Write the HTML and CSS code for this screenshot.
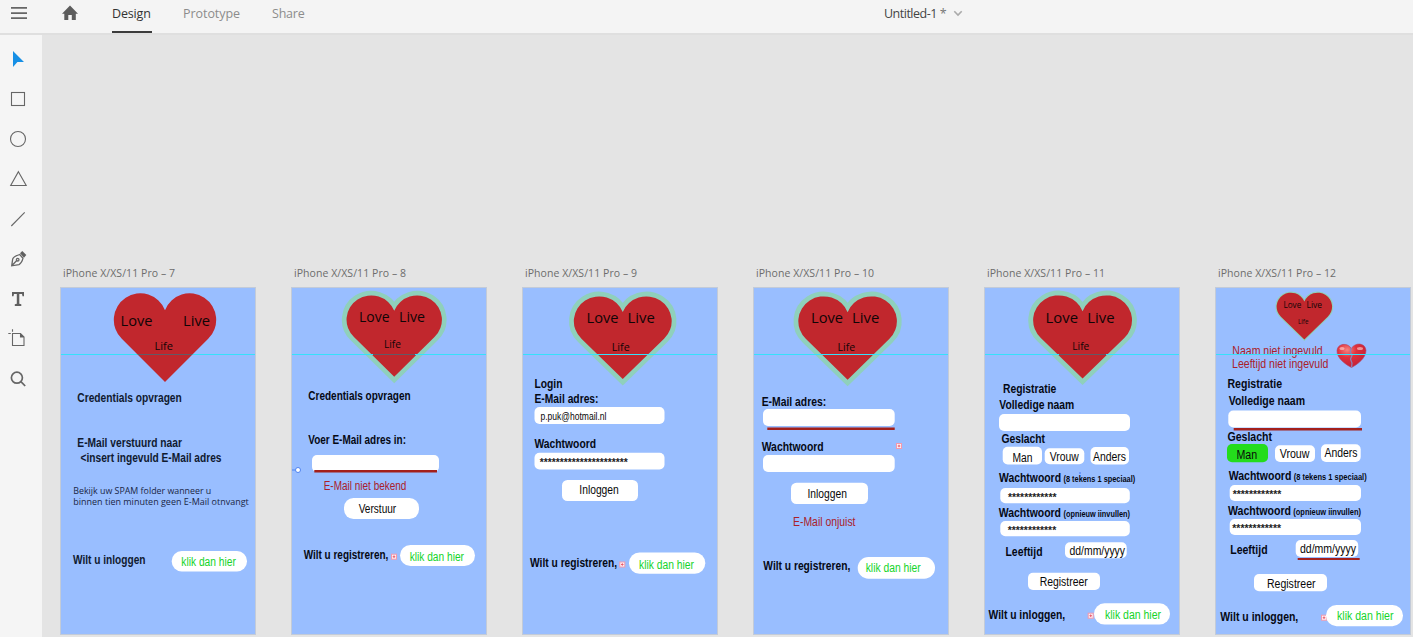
FILE: index.html
```html
<!DOCTYPE html>
<html lang="nl">
<head>
<meta charset="utf-8">
<title>Untitled-1</title>
<link rel="stylesheet" href="styles.css">
</head>
<body>
<header class="topbar">
  <svg class="menu" width="18" height="18" viewBox="0 0 18 18"><path d="M1 2.900h16M1 8.100h16M1 13.200h16"/></svg>
  <svg class="home" width="18" height="18" viewBox="0 0 18 18"><path d="M9 .6 17 8.700h-2.200V15h-4V10H7.300v5h-4V8.700H1z"/></svg>
  <nav class="tabs">
    <span class="tab active">Design</span>
    <span class="tab prototype">Prototype</span>
    <span class="tab share">Share</span>
  </nav>
  <div class="doc"><span>Untitled-1</span><span class="dirty">*</span>
    <svg width="10" height="7" viewBox="0 0 10 7"><path d="M1.300 1.300 5 5 8.700 1.300"/></svg>
  </div>
</header>
<div class="workspace">
  <aside class="tools">
    <svg class="tool select" viewBox="0 0 20 20"><path d="M5 2v16l4.400-5H16z"/></svg>
    <svg class="tool" viewBox="0 0 20 20"><rect x="3.500" y="3.500" width="13" height="13"/></svg>
    <svg class="tool" viewBox="0 0 20 20"><circle cx="10" cy="10" r="7.500"/></svg>
    <svg class="tool" viewBox="0 0 20 20"><path d="M10.400 2.700 18.200 16.500H2.700z"/></svg>
    <svg class="tool" viewBox="0 0 20 20"><path d="M3.300 17 16.700 3.400"/></svg>
    <svg class="tool pen" viewBox="0 0 20 20"><path d="M3.700 16.800 4.700 10Q5.500 7.600 11.700 5.500L15 9.200Q13.800 14.200 11 15.600zL9 11.300"/><circle cx="9.700" cy="10.700" r="1.300"/><path class="solid" d="m12 4.300 2.300-2.300 4 4-2.300 2.700z"/></svg>
    <svg class="tool" viewBox="0 0 20 20"><path class="solid" d="M4 3h12v4.200h-1.500L14 5h-2.700v9.800l2 .4V17H6.800v-1.800l2-.4V5H6l-.5 2.200H4z"/></svg>
    <svg class="tool" viewBox="0 0 20 20"><path d="M4.500 4.500h8l3.500 3.500v8.500H4.500zM.3 4.500h2.500M4.500 .3v2.500M12.500 4.500V8H16"/><path class="solid" d="M12.500 4.500V8H16z"/></svg>
    <svg class="tool thick" viewBox="0 0 20 20"><circle cx="8.900" cy="8.700" r="5.500"/><path d="m12.900 12.700 4.300 4.300"/></svg>
  </aside>
  <main class="canvas">
    <section class="artboard">
      <h2>iPhone X/XS/11 Pro – 7</h2>
      <svg class="screen" viewBox="61 288 194 346">
        <defs>
          <path id="heart" d="M51 88 7.800 44.800A26.500 26.500 0 1 1 51 16.200A26.500 26.500 0 1 1 94.200 44.800Z"/>
          <g id="marker"><rect class="marker-box" x="-2.500" y="-2.500" width="5" height="5"/><path class="marker-dot" d="M-1.300 0h2.600M0-1.300v2.600"/></g>
        </defs>
        <path class="guide" d="M61 354.500h195"/>
        <use class="heart" href="#heart" transform="translate(114 294)"/>
        <path class="guide-dim" d="M138 354.500h54"/>
        <g class="logo light">
          <text x="120.500" y="326" textLength="32">Love</text><text x="183" y="326" textLength="27">Live</text>
          <text class="life" x="154.500" y="350" textLength="18.500">Life</text>
        </g>
        <g class="label soft">
          <text x="77.300" y="402" textLength="104.500">Credentials opvragen</text>
          <text x="77.300" y="447" textLength="104.700">E-Mail verstuurd naar</text>
          <text x="80.500" y="462" textLength="141">&lt;insert ingevuld E-Mail adres</text>
          <text x="73" y="564" textLength="72.500">Wilt u inloggen</text>
        </g>
        <g class="note">
          <text x="73.300" y="494" textLength="138">Bekijk uw SPAM folder wanneer u</text>
          <text x="73.300" y="505" textLength="175.500">binnen tien minuten geen E-Mail otnvangt</text>
        </g>
        <rect class="box" x="171.700" y="551" width="75.300" height="20.500" rx="10"/>
        <text class="link" x="181.300" y="566" textLength="54.500">klik dan hier</text>
      </svg>
    </section>

    <section class="artboard">
      <h2>iPhone X/XS/11 Pro – 8</h2>
      <svg class="screen" viewBox="292 288 194 346">
        <use class="heart glow" href="#heart" transform="translate(346.700 296) scale(.932 .917)"/>
        <path class="guide" d="M292 354.500h195"/>
        <path class="guide-dim" d="M373 354.500h42"/>
        <g class="logo">
          <text x="359" y="321.700" textLength="30.500">Love</text><text x="399" y="321.700" textLength="26">Live</text>
          <text class="life" x="384" y="348.300" textLength="17">Life</text>
        </g>
        <g class="label">
          <text x="308.300" y="400" textLength="102.300">Credentials opvragen</text>
          <text x="308.300" y="444" textLength="97.700">Voer E-Mail adres in:</text>
          <text x="303.700" y="559" textLength="84.600">Wilt u registreren,</text>
        </g>
        <rect class="box" x="312" y="455" width="127" height="17" rx="5"/>
        <path class="error-line" d="M314.300 471.200H437"/>
        <text class="error" x="323.700" y="489.500" textLength="82.700">E-Mail niet bekend</text>
        <rect class="box" x="344" y="498" width="75" height="21" rx="9.500"/>
        <text class="value" x="358.700" y="513" textLength="37.500">Verstuur</text>
        <use href="#marker" x="394" y="556.700"/>
        <rect class="box" x="400" y="545" width="75" height="21" rx="10.500"/>
        <text class="link" x="409.700" y="560.700" textLength="54.300">klik dan hier</text>
        <path class="anchor" d="M292 470h3"/><circle class="anchor" cx="298" cy="470" r="2.500"/>
      </svg>
    </section>

    <section class="artboard">
      <h2>iPhone X/XS/11 Pro – 9</h2>
      <svg class="screen" viewBox="523 288 194 346">
        <use class="heart glow" href="#heart" transform="translate(574 297) scale(.956 .932)"/>
        <path class="guide" d="M523 354.500h195"/>
        <g class="logo">
          <text x="586.500" y="323.300" textLength="32">Love</text><text x="627.500" y="323.300" textLength="27.300">Live</text>
          <text class="life" x="611.700" y="351" textLength="18">Life</text>
        </g>
        <g class="label">
          <text x="534.500" y="388" textLength="28">Login</text>
          <text x="534.500" y="403" textLength="64">E-Mail adres:</text>
          <text x="534.500" y="448" textLength="61.500">Wachtwoord</text>
          <text x="530" y="566.500" textLength="87">Wilt u registreren,</text>
        </g>
        <rect class="box" x="534.500" y="407" width="130" height="17" rx="5"/>
        <text class="value small" x="540.500" y="420" textLength="66">p.puk@hotmail.nl</text>
        <rect class="box" x="534.500" y="452.700" width="130" height="16.700" rx="5"/>
        <text class="stars" x="539.700" y="465.500" textLength="88">**********************</text>
        <rect class="box" x="562" y="480" width="76" height="21" rx="5.500"/>
        <text class="value" x="579.300" y="494.300" textLength="39.500">Inloggen</text>
        <use href="#marker" x="622.300" y="564.500"/>
        <rect class="box" x="629" y="552.500" width="76.300" height="21.300" rx="10.500"/>
        <text class="link" x="639" y="568.700" textLength="55">klik dan hier</text>
      </svg>
    </section>

    <section class="artboard">
      <h2>iPhone X/XS/11 Pro – 10</h2>
      <svg class="screen" viewBox="754 288 194 346">
        <use class="heart glow" href="#heart" transform="translate(798.500 297) scale(.963 .94)"/>
        <path class="guide" d="M754 354.500h195"/>
        <g class="logo">
          <text x="811" y="323" textLength="32">Love</text><text x="852" y="323" textLength="27.300">Live</text>
          <text class="life" x="837.500" y="350.700" textLength="17.700">Life</text>
        </g>
        <g class="label">
          <text x="761.700" y="405.500" textLength="64.500">E-Mail adres:</text>
          <text x="761.700" y="451" textLength="62">Wachtwoord</text>
          <text x="763.300" y="570" textLength="87">Wilt u registreren,</text>
        </g>
        <rect class="box" x="763" y="409" width="131.700" height="17" rx="5"/>
        <path class="error-line" d="M767.300 428.700H894.700"/>
        <use href="#marker" x="899" y="446"/>
        <rect class="box" x="763" y="455" width="131.700" height="17" rx="5"/>
        <rect class="box" x="791" y="482.700" width="77" height="21.300" rx="5.500"/>
        <text class="value" x="807.500" y="497.700" textLength="39.500">Inloggen</text>
        <text class="error" x="793" y="525.700" textLength="62.500">E-Mail onjuist</text>
        <rect class="box" x="857.700" y="557" width="77.300" height="21.700" rx="10.800"/>
        <text class="link" x="865.700" y="572" textLength="55">klik dan hier</text>
      </svg>
    </section>

    <section class="artboard">
      <h2>iPhone X/XS/11 Pro – 11</h2>
      <svg class="screen" viewBox="985 288 194 346">
        <use class="heart glow" href="#heart" transform="translate(1033.300 296) scale(.966 .937)"/>
        <path class="guide" d="M985 354.500h195"/>
        <path class="guide-dim" d="M1059 354.500h47"/>
        <g class="logo">
          <text x="1045.500" y="322.700" textLength="32.500">Love</text><text x="1087.200" y="322.700" textLength="27.300">Live</text>
          <text class="life" x="1072.300" y="350" textLength="17">Life</text>
        </g>
        <g class="label">
          <text x="1003" y="393" textLength="53.300">Registratie</text>
          <text x="999.300" y="408.500" textLength="75">Volledige naam</text>
          <text x="1001.500" y="443" textLength="43.500">Geslacht</text>
          <text x="999" y="482" textLength="62">Wachtwoord</text>
          <text x="998.700" y="517" textLength="62.300">Wachtwoord</text>
          <text x="1005.500" y="556" textLength="37">Leeftijd</text>
          <text x="988.500" y="618.700" textLength="76.700">Wilt u inloggen,</text>
          <text class="hint" x="1063.500" y="482" textLength="71.700">(8 tekens 1 speciaal)</text>
          <text class="hint" x="1063.500" y="517" textLength="66.500">(opnieuw iinvullen)</text>
        </g>
        <rect class="box" x="999" y="414" width="131" height="17" rx="5"/>
        <rect class="box" x="1002.700" y="446.700" width="39.300" height="17.700" rx="5"/>
        <rect class="box" x="1044.700" y="448.300" width="39.600" height="16" rx="5"/>
        <rect class="box" x="1090.500" y="447" width="38.500" height="17.500" rx="5"/>
        <rect class="box" x="1000.300" y="488" width="129.500" height="15.200" rx="5"/>
        <rect class="box" x="1000.300" y="521" width="129.500" height="15.200" rx="5"/>
        <rect class="box" x="1065" y="542.300" width="61.700" height="16" rx="5"/>
        <rect class="box" x="1028" y="572.700" width="72" height="17.300" rx="5"/>
        <circle class="dot" cx="1080" cy="473" r=".8"/>
        <g class="value">
          <text x="1012.500" y="461.700" textLength="20">Man</text>
          <text x="1049.700" y="461" textLength="29">Vrouw</text>
          <text x="1093" y="460.500" textLength="33">Anders</text>
          <text x="1069.500" y="555" textLength="55.500">dd/mm/yyyy</text>
          <text x="1039.700" y="586" textLength="48">Registreer</text>
        </g>
        <text class="stars" x="1008" y="500.500" textLength="48.500">************</text>
        <text class="stars" x="1007.700" y="534" textLength="48.500">************</text>
        <use href="#marker" x="1090.700" y="615.700"/>
        <rect class="box" x="1094" y="603.300" width="76" height="21.200" rx="10.500"/>
        <text class="link" x="1105" y="618.700" textLength="56">klik dan hier</text>
      </svg>
    </section>

    <section class="artboard">
      <h2>iPhone X/XS/11 Pro – 12</h2>
      <svg class="screen" viewBox="1216 288 194 346">
        <defs>
          <radialGradient id="gloss" cx=".35" cy=".25" r=".8"><stop offset="0" stop-color="#f8837e"/><stop offset=".4" stop-color="#e0313d"/><stop offset="1" stop-color="#c01f35"/></radialGradient>
        </defs>
        <use class="heart glow thin" href="#heart" transform="translate(1276.700 293) scale(.542 .528)"/>
        <g class="logo mini">
          <text x="1283.500" y="307.700" textLength="17.700">Love</text><text x="1306.500" y="307.700" textLength="15.500">Live</text>
          <text class="life" x="1298" y="323.500" textLength="10.500">Life</text>
        </g>
        <text class="error" x="1232.300" y="354.500" textLength="90.300">Naam niet ingevuld</text>
        <text class="error" x="1232" y="368.300" textLength="96.500">Leeftijd niet ingevuld</text>
        <g class="broken">
          <path class="half" d="M1351.500 367.500C1345.500 364.500 1336.500 358 1337 350.500C1337.500 343.500 1347.500 342 1351.300 348.500C1355 342 1365.500 342.500 1366 350.500C1366 358 1357.500 364.500 1351.500 367.500Z"/>
          <path class="crack" d="M1351.300 348 1350.300 352 1352 355.500 1350.500 359 1352 363 1351.500 367.500"/>
          <ellipse class="shine" cx="1342" cy="348.500" rx="2.600" ry="1.500"/><ellipse class="shine" cx="1360" cy="348.500" rx="3" ry="1.500"/>
        </g>
        <path class="guide" d="M1216 354.500h195"/>
        <g class="label">
          <text x="1227.500" y="388" textLength="54.500">Registratie</text>
          <text x="1228.700" y="405" textLength="76.300">Volledige naam</text>
          <text x="1227.500" y="441" textLength="44.500">Geslacht</text>
          <text x="1228.700" y="480" textLength="62.700">Wachtwoord</text>
          <text x="1228" y="515" textLength="63">Wachtwoord</text>
          <text x="1230.300" y="553.500" textLength="37.300">Leeftijd</text>
          <text x="1220.300" y="620.700" textLength="78">Wilt u inloggen,</text>
          <text class="hint" x="1293.700" y="480" textLength="73">(8 tekens 1 speciaal)</text>
          <text class="hint" x="1293.300" y="515.300" textLength="67.700">(opnieuw iinvullen)</text>
        </g>
        <rect class="box" x="1228.300" y="410.500" width="132.700" height="17" rx="5"/>
        <path class="error-line" d="M1233.700 429.200H1362"/>
        <rect class="box chosen" x="1227" y="444" width="41" height="18.300" rx="5"/>
        <rect class="box" x="1275" y="445.300" width="40" height="16.700" rx="5"/>
        <rect class="box" x="1321" y="444.300" width="39.700" height="17.700" rx="5"/>
        <rect class="box" x="1229.700" y="485" width="131.300" height="16" rx="5"/>
        <rect class="box" x="1229.700" y="519" width="131.300" height="16" rx="5"/>
        <rect class="box" x="1295.700" y="540" width="62.500" height="17" rx="5"/>
        <path class="error-line slim" d="M1297.700 559H1359.700"/>
        <rect class="box" x="1254" y="574" width="73" height="17.200" rx="5"/>
        <g class="value">
          <text x="1236.500" y="458.500" textLength="20.700">Man</text>
          <text x="1279.700" y="457.700" textLength="29.700">Vrouw</text>
          <text x="1324.500" y="457" textLength="33">Anders</text>
          <text x="1300" y="553" textLength="56">dd/mm/yyyy</text>
          <text x="1267" y="587.700" textLength="48.500">Registreer</text>
        </g>
        <text class="stars" x="1232.700" y="497.700" textLength="48.700">************</text>
        <text class="stars" x="1232.300" y="531.700" textLength="48.700">************</text>
        <use href="#marker" x="1324" y="617.700"/>
        <rect class="box" x="1326" y="605" width="77" height="21.200" rx="10.500"/>
        <text class="link" x="1337" y="620" textLength="56.500">klik dan hier</text>
      </svg>
    </section>
  </main>
</div>
<script src="fit.js"></script>
</body>
</html>
```
FILE: fit.js
```js
// Condense each artboard text's glyphs, not only its spacing, to the set length.
document.querySelectorAll('text[textLength]').forEach(function (t) {
  t.setAttribute('lengthAdjust', 'spacingAndGlyphs');
});
```
FILE: styles.css
```css
* { box-sizing: border-box; }
body {
  margin: 0;
  width: 1413px;
  height: 637px;
  overflow: hidden;
  display: flex;
  flex-direction: column;
  background: #e4e4e4;
  font-family: "Open Sans", "Noto Sans", sans-serif;
  color: #444;
}
svg { display: block; flex: none; }

/* Top bar */
.topbar {
  height: 35px;
  flex: none;
  display: flex;
  align-items: flex-start;
  background: #f4f4f4;
  border-bottom: 2px solid #dfdfdf;
  padding-left: 10px;
  font-size: 12.5px;
  line-height: 17px;
}
.menu { margin-top: 5px; fill: none; stroke: #666; stroke-width: 1.8; }
.home { margin: 5px 0 0 33px; fill: #5c5c5c; }
.tabs { display: flex; margin-left: 33px; height: 33px; }
.tab { padding-top: 5px; color: #8c8c8c; white-space: nowrap; }
.tab.active { width: 40px; color: #333; border-bottom: 2px solid #3c3c3c; letter-spacing: -.15px; }
.tab.prototype { margin-left: 31px; width: 57px; letter-spacing: -.05px; }
.tab.share { margin-left: 32px; letter-spacing: -.2px; }
.doc { display: flex; margin-left: auto; width: 529px; padding-top: 5px; letter-spacing: -.5px; }
.dirty { margin-left: 3px; color: #777; }
.doc svg { margin: 5px 0 0 7px; fill: none; stroke: #aaa; stroke-width: 1.6; }

/* Tool rail */
.workspace { display: flex; flex: 1; min-height: 0; }
.tools {
  width: 42px;
  flex: none;
  display: flex;
  flex-direction: column;
  gap: 20px;
  padding: 14px 0 0 8px;
  background: #f5f5f5;
}
.tool { width: 20px; height: 20px; fill: none; stroke: #666; stroke-width: 1.1; }
.tool.select { fill: #168fe5; stroke: none; }
.tool.pen { stroke-width: 1.3; }
.tool.thick { stroke-width: 1.7; }
.tool .solid { fill: #606060; stroke: none; }

/* Artboards */
.canvas {
  flex: 1;
  display: flex;
  gap: 35px;
  padding: 230px 0 0 18px;
  overflow: hidden;
}
.artboard { flex: none; width: 196px; }
h2 {
  margin: 0;
  height: 22px;
  padding-left: 3px;
  font-size: 10.5px;
  line-height: 16px;
  font-weight: 400;
  letter-spacing: .06px;
  color: #6c6c6c;
  white-space: nowrap;
}
.screen {
  width: 196px;
  height: 348px;
  background: #99beff;
  border: 1px solid #c3cbd8;
}
.guide { stroke: #35e1fa; stroke-width: 1.2; }
.guide-dim { stroke: #635a65; stroke-width: 1; }
.heart { fill: #c1272d; }
.glow { stroke: #8fd0bc; stroke-width: 10px; paint-order: stroke; }
.glow.thin { stroke-width: 4px; }
.logo { font: 500 15px "Open Sans", sans-serif; fill: #100506; }
.logo.light { font-weight: 400; }
.logo .life { font-size: 11.5px; }
.logo.mini { font-size: 8.5px; }
.logo.mini .life { font-size: 6.5px; }
.label { font: bold 12px "Liberation Sans", Arial, sans-serif; fill: #050914; }
.label.soft { fill: #101a30; }
.label .hint { font-size: 9.5px; }
.note { font: 9px "Open Sans", sans-serif; fill: #1a2645; }
.value, .link, .error { font: 12.5px "Liberation Sans", Arial, sans-serif; }
.value { fill: #080808; }
.value.small { font-size: 11px; }
.link { fill: #14d42a; }
.error { fill: #aa2029; }
.stars { font: bold 10px "Liberation Sans", Arial, sans-serif; fill: #222; }
.box { fill: #fff; }
.box.chosen { fill: #24dc1c; }
.error-line { stroke: #a3201c; stroke-width: 2.4; }
.error-line.slim { stroke-width: 1.8; }
.marker-box { fill: #fff1f3; stroke: #f29aae; }
.marker-dot { stroke: #e8566a; stroke-width: .9; }
.anchor { fill: #fff; stroke: #4d82f0; stroke-width: 1; }
.dot { fill: #3d6df0; }
.half { fill: url(#gloss); stroke: #b0486c; stroke-width: .6; }
.crack { fill: none; stroke: #8f7fb4; stroke-width: 1.3; }
.shine { fill: #ffd9d6; opacity: .6; }
```
